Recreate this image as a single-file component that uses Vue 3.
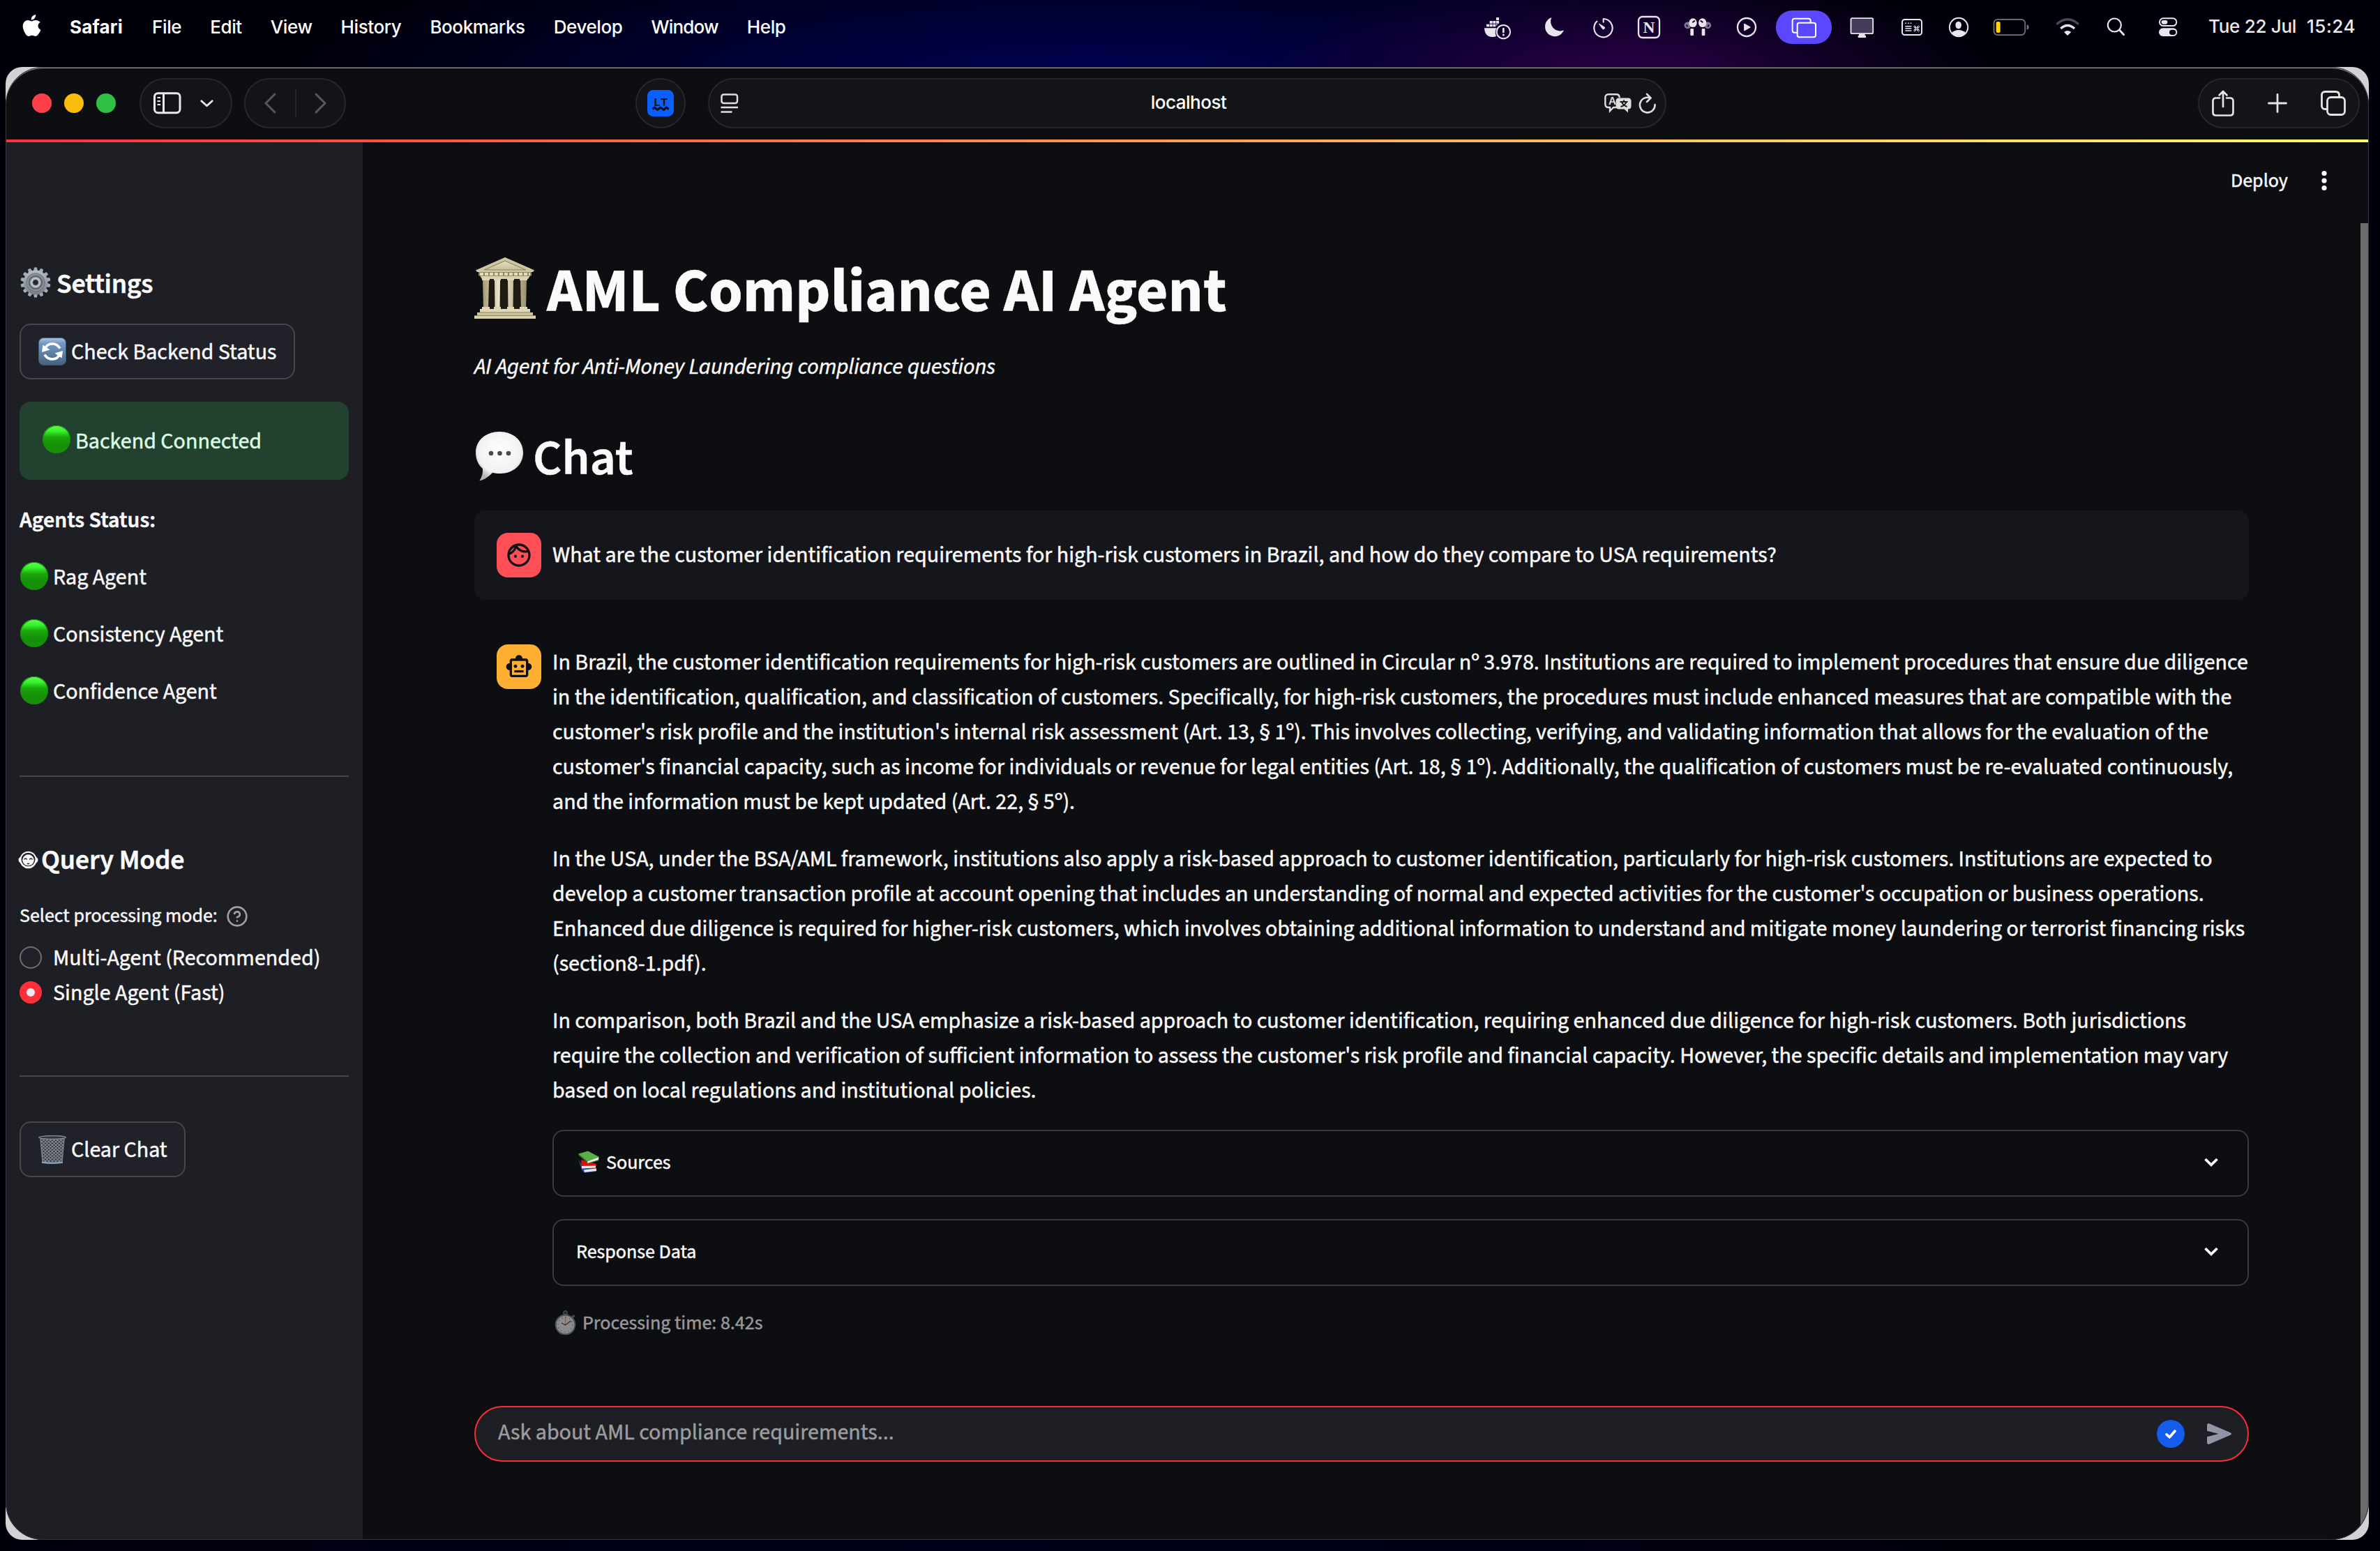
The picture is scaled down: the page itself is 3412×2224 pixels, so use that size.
<script setup>
const menus = ['File', 'Edit', 'View', 'History', 'Bookmarks', 'Develop', 'Window', 'Help']
const agents = ['Rag Agent', 'Consistency Agent', 'Confidence Agent']
const paragraphs = [
  [
    'In Brazil, the customer identification requirements for high-risk customers are outlined in Circular nº 3.978. Institutions are required to implement procedures that ensure due diligence',
    'in the identification, qualification, and classification of customers. Specifically, for high-risk customers, the procedures must include enhanced measures that are compatible with the',
    "customer's risk profile and the institution's internal risk assessment (Art. 13, § 1º). This involves collecting, verifying, and validating information that allows for the evaluation of the",
    "customer's financial capacity, such as income for individuals or revenue for legal entities (Art. 18, § 1º). Additionally, the qualification of customers must be re-evaluated continuously,",
    'and the information must be kept updated (Art. 22, § 5º).',
  ],
  [
    'In the USA, under the BSA/AML framework, institutions also apply a risk-based approach to customer identification, particularly for high-risk customers. Institutions are expected to',
    "develop a customer transaction profile at account opening that includes an understanding of normal and expected activities for the customer's occupation or business operations.",
    'Enhanced due diligence is required for higher-risk customers, which involves obtaining additional information to understand and mitigate money laundering or terrorist financing risks',
    '(section8-1.pdf).',
  ],
  [
    'In comparison, both Brazil and the USA emphasize a risk-based approach to customer identification, requiring enhanced due diligence for high-risk customers. Both jurisdictions',
    "require the collection and verification of sufficient information to assess the customer's risk profile and financial capacity. However, the specific details and implementation may vary",
    'based on local regulations and institutional policies.',
  ],
]
const gearTeeth = Array.from({ length: 14 }, (_, i) => (i * 360) / 14)
</script>

<template>
  <div class="screen">
    <header class="menubar">
      <svg class="apple" viewBox="0 0 27 32"><path d="M19.2 0c.3 2-.6 3.900-1.700 5.200-1.200 1.400-3 2.400-4.700 2.200-.3-1.900.6-3.900 1.700-5.100C15.700 1 17.700.1 19.200 0zM25.600 11c-2 1.200-3.100 2.900-3.100 5.100 0 2.600 1.500 4.700 3.900 5.600-.6 1.900-1.500 3.700-2.700 5.400-1.300 1.900-2.600 3.800-4.700 3.800-2 0-2.600-1.200-5-1.200s-3.100 1.200-5 1.200c-2 .1-3.500-2-4.800-3.900C1.500 23.200-.8 16.300 1.900 11.800c1.300-2.200 3.600-3.700 6.100-3.700 2.100 0 3.900 1.400 5.200 1.400 1.200 0 3.400-1.600 5.900-1.400 1.200.1 4.500.4 6.500 2.900z" fill="#fff"/></svg>
      <b class="app-name">Safari</b>
      <nav class="menus"><span v-for="m in menus" :key="m">{{ m }}</span></nav>

      <div class="status">
        <svg width="69" height="64" viewBox="0 0 207 192">
          <g fill="#e8e5ec"><path d="M75 51h12v12H75zM47 66h12v11H47zM61 66h12v11H61zM75 66h12v11H75zM33 80h12v11H33zM47 80h12v11H47zM61 80h12v11H61zM75 80h8l-8 6z"/><path d="M24 97h53c-7 9-7 23-2 34-5 3-11 4-18 4-21 0-32-14-33-38z"/></g>
          <circle cx="106" cy="113" r="29" fill="none" stroke="#e8e5ec" stroke-width="6"/>
          <path d="M106 99v15" stroke="#e8e5ec" stroke-width="8" stroke-linecap="round"/><circle cx="106" cy="126" r="4.500" fill="#e8e5ec"/>
        </svg>
        <svg width="74.333" height="64" viewBox="207 0 223 192"><path d="M313 51A42 42 0 1 0 366 106A41 41 0 0 1 313 51Z" fill="#e8e5ec"/></svg>
        <svg width="66.667" height="64" viewBox="430 0 200 192"><path d="M537 71V57A39.500 39.500 0 1 1 509 68" fill="none" stroke="#e8e5ec" stroke-width="6.500" stroke-linecap="round" stroke-linejoin="round"/><path d="M518 78l24 15a6 6 0 0 1-8 8z" fill="#e8e5ec" stroke="#e8e5ec" stroke-width="3" stroke-linejoin="round"/></svg>
        <svg width="66.667" height="64" viewBox="630 0 200 192"><rect x="687" y="48" width="90" height="90" rx="17" fill="none" stroke="#e8e5ec" stroke-width="7"/><text x="732" y="116" text-anchor="middle" font-family="Liberation Serif, serif" font-weight="700" font-size="70" fill="#e8e5ec">N</text></svg>
        <svg width="73.333" height="64" viewBox="830 0 220 192">
          <circle cx="897" cy="85" r="14.500" fill="#827894"/><circle cx="984" cy="85" r="14.500" fill="#827894"/>
          <g fill="#e8e5ec"><ellipse cx="920" cy="74" rx="17" ry="19"/><ellipse cx="961" cy="74" rx="17" ry="19"/><rect x="909" y="99" width="14" height="30" rx="3"/><rect x="958" y="99" width="14" height="30" rx="3"/></g>
          <path d="M920 71l7-5M961 71l-7-5M893 84l3 5M988 84l-3 5" stroke="#1a0735" stroke-width="6" stroke-linecap="round"/>
        </svg>
        <svg width="70" height="64" viewBox="1050 0 210 192"><circle cx="1152" cy="93" r="39" fill="none" stroke="#e8e5ec" stroke-width="7"/><path d="M1142 78l26 15-26 15z" fill="#e8e5ec" stroke="#e8e5ec" stroke-width="3" stroke-linejoin="round"/></svg>
        <svg width="93.333" height="64" viewBox="1260 0 280 192">
          <rect x="1278" y="21" width="240" height="144" rx="70" fill="#5b47ff"/>
          <g fill="none" stroke="#fff" stroke-width="6"><path d="M1368 116h-10q-9 0-9-9V65q0-9 9-9h60q9 0 9 9v8"/><rect x="1370" y="74" width="79" height="62" rx="9"/></g>
        </svg>
        <svg width="72.667" height="64" viewBox="-8 0 218 192"><rect x="53.500" y="54.500" width="95" height="66" rx="5" fill="#463b5b" stroke="#e8e5ec" stroke-width="5.500"/><path d="M88 121h26v8h4v9H84v-9h4z" fill="#e8e5ec"/></svg>
        <svg width="68.333" height="64" viewBox="210 0 205 192">
          <rect x="273" y="60" width="84" height="66" rx="11" fill="none" stroke="#e8e5ec" stroke-width="6"/>
          <path d="M286 76h5M297 76h5M308 76h5M286 89h27M286 98h27M286 108h27" stroke="#e8e5ec" stroke-width="4.500"/>
          <g fill="none" stroke="#e8e5ec" stroke-width="3"><path d="M331 90v18M339 90v18M325 95.500h20M325 102.500h20"/><circle cx="327" cy="91" r="3.500"/><circle cx="343" cy="91" r="3.500"/><circle cx="327" cy="107" r="3.500"/><circle cx="343" cy="107" r="3.500"/></g>
        </svg>
        <svg width="65" height="64" viewBox="415 0 195 192"><circle cx="517" cy="93" r="39.500" fill="none" stroke="#e8e5ec" stroke-width="6"/><ellipse cx="516" cy="84" rx="13" ry="15.500" fill="#e8e5ec"/><path d="M485 119q13-14 32-14t32 14a41 41 0 0 1-64 0z" fill="#e8e5ec"/></svg>
        <svg width="86.667" height="64" viewBox="610 0 260 192"><rect x="668.500" y="59.500" width="134" height="67" rx="16" fill="none" stroke="#77747f" stroke-width="5"/><rect x="678" y="69" width="18" height="48" rx="7" fill="#ffd60a"/><path d="M810 82q9 3 9 11t-9 11z" fill="#77747f"/></svg>
        <svg width="75" height="64" viewBox="870 0 225 192"><g fill="none" stroke-width="10"><path d="M937 80Q984 38 1032 80" stroke="#4b4959"/><path d="M955 99Q984 72 1014 99" stroke="#e8e5ec"/></g><path d="M969 114q15-12 31 0l-16 15z" fill="#e8e5ec"/></svg>
        <svg width="70" height="64" viewBox="1095 0 210 192"><circle cx="1186" cy="84" r="28.500" fill="none" stroke="#e8e5ec" stroke-width="6.500"/><path d="M1208 106l18 19" stroke="#e8e5ec" stroke-width="8.500" stroke-linecap="round"/></svg>
        <svg width="65" height="64" viewBox="1305 0 195 192"><rect x="1380" y="55" width="73" height="32" rx="16" fill="none" stroke="#e8e5ec" stroke-width="6"/><rect x="1388" y="63" width="26" height="17" rx="8.500" fill="#e8e5ec"/><rect x="1377" y="97" width="79" height="35" rx="17.500" fill="#e8e5ec"/><rect x="1422" y="104" width="28" height="22" rx="11" fill="#02000f"/></svg>
      </div>
      <div class="clock"><span>Tue 22 Jul</span><span class="time">15:24</span></div>
    </header>

    <div class="window-back">
      <div class="window">
        <div class="toolbar">
          <i class="light red"></i><i class="light yellow"></i><i class="light green"></i>
          <div class="pill sidebar-pill">
            <svg width="40" height="32" viewBox="0 0 40 32" fill="none" stroke="#e9e9ea" stroke-width="3"><rect x="1.500" y="1.700" width="36.500" height="28" rx="5"/><path d="M14.500 2v28"/><path d="M5.500 8h4.500M5.500 13h4.500M5.500 18h4.500" stroke-width="2.200"/></svg>
            <svg class="small-chev" width="19" height="11" viewBox="0 0 19 11" fill="none" stroke="#e9e9ea" stroke-width="2.800" stroke-linecap="round" stroke-linejoin="round"><path d="M1.800 1.800l7.700 7 7.700-7"/></svg>
          </div>
          <div class="pill nav-pill">
            <svg width="17" height="30" viewBox="0 0 17 30" fill="none" stroke="#57585c" stroke-width="3" stroke-linecap="round" stroke-linejoin="round"><path d="M15 2L2 15l13 13"/></svg>
            <i></i>
            <svg width="17" height="30" viewBox="0 0 17 30" fill="none" stroke="#57585c" stroke-width="3" stroke-linecap="round" stroke-linejoin="round"><path d="M2 2l13 13L2 28"/></svg>
          </div>
          <div class="pill lt-pill">
            <svg width="38" height="38" viewBox="0 0 38 38"><rect width="38" height="38" rx="8.500" fill="#0a60ff"/><text x="19" y="22.500" text-anchor="middle" font-family="Liberation Mono, monospace" font-weight="700" font-size="17" fill="#10131c">LT</text><path d="M7.500 27.500l3-2.500 4 3.500 4.500-3.500 4.500 3.500 4-3.500 3 2.500" fill="none" stroke="#10131c" stroke-width="3" stroke-linejoin="round"/></svg>
          </div>
          <div class="pill address">
            <svg width="26" height="28" viewBox="0 0 26 28" fill="none" stroke="#dededf" stroke-width="2.500"><rect x="1.500" y="1.400" width="22.500" height="12.500" rx="3"/><path d="M.5 20h24.500M.5 26.500h16"/></svg>
            <span>localhost</span>
            <div class="address-end">
              <svg width="39" height="28" viewBox="0 0 39 28"><path d="M17 20H13l-5 5v-5H6q-4.700 0-4.700-4.700V6Q1.300 1.300 6 1.300h11q4.700 0 4.700 4.700" fill="none" stroke="#dededf" stroke-width="2.400"/><text x="11.200" y="16" text-anchor="middle" font-family="Inter, sans-serif" font-size="15" font-weight="600" fill="#dededf">A</text><path d="M21 6.500h13q4.500 0 4.500 4.500v7q0 4.500-4.500 4.500v5L28.500 22.500H21q-4.500 0-4.500-4.500v-7q0-4.500 4.500-4.500z" fill="#dededf"/><path d="M22.500 12h11M28 9.500V12M31.500 12q-1.500 5-8 7M25 12q1.500 5 7.500 7" fill="none" stroke="#15161a" stroke-width="2"/></svg>
              <svg width="26" height="30" viewBox="0 0 26 30" fill="none" stroke="#dededf" stroke-width="2.600" stroke-linecap="round" stroke-linejoin="round"><path d="M17 7.700A10.800 10.800 0 1 0 23.500 17"/><path d="M12 1.800L17.500 7.500 12 13"/></svg>
            </div>
          </div>
          <div class="pill actions">
            <svg width="32" height="38" viewBox="0 0 32 38" fill="none" stroke="#e4e4e5" stroke-width="2.700" stroke-linecap="round" stroke-linejoin="round"><path d="M11 11.500H6q-4.500 0-4.500 4.500v16q0 4.500 4.500 4.500h20q4.500 0 4.500-4.500V16q0-4.500-4.500-4.500h-5M16 24V2M10.500 7.500L16 2l5.500 5.500"/></svg>
            <svg width="28" height="28" viewBox="0 0 28 28" stroke="#e4e4e5" stroke-width="2.800" stroke-linecap="round"><path d="M14 1.500v25M1.500 14h25"/></svg>
            <svg width="36" height="36" viewBox="0 0 36 36" fill="none" stroke="#e4e4e5" stroke-width="2.800"><path d="M8.500 26.500H6.500q-5 0-5-5V6.500q0-5 5-5h15q5 0 5 5v2"/><rect x="9.500" y="9.500" width="25" height="25" rx="5"/></svg>
          </div>
        </div>
        <div class="rainbow"></div>

        <div class="body">
          <aside class="sidebar">
            <h2 class="settings">
              <svg width="44" height="44" viewBox="-22 -22 44 44">
                <defs><linearGradient id="gearFill" x1="0" y1="0" x2="0" y2="1"><stop offset="0" stop-color="#b3bfca"/><stop offset="1" stop-color="#7b7b84"/></linearGradient></defs>
                <g fill="url(#gearFill)"><path v-for="a in gearTeeth" :key="a" d="M-3.200-15L-2-21.500H2L3.200-15z" :transform="`rotate(${a})`" fill="#a3adb7"/><circle r="17.500"/></g>
                <circle r="13.500" fill="#6a6f78"/><circle r="11.500" fill="none" stroke="#8d939b" stroke-width="2"/><circle r="9" fill="#5d626b"/>
                <circle r="6" fill="#3c3f45" stroke="#b9c0c8" stroke-width="3.500"/><circle r="2.600" fill="#26231f"/>
              </svg>
              <span>Settings</span>
            </h2>
            <button class="btn check">
              <svg width="40" height="40" viewBox="0 0 40 40">
                <defs><linearGradient id="syncFill" x1="0" y1="0" x2="0" y2="1"><stop offset="0" stop-color="#a9c3de"/><stop offset=".2" stop-color="#7599c3"/><stop offset="1" stop-color="#46617f"/></linearGradient></defs>
                <rect x=".5" y=".5" width="39" height="39" rx="7" fill="url(#syncFill)" stroke="#3c5876"/>
                <path d="M9.500 16Q12.500 9 20 9q7 0 11 6.500" fill="none" stroke="#fff" stroke-width="3.600"/><path d="M30.500 24Q27.500 31 20 31q-7 0-11-6.500" fill="none" stroke="#fff" stroke-width="3.600"/>
                <path d="M5 21l1.500-10.500 10 7zM35 19l-1.500 10.500-10-7z" fill="#fff"/>
              </svg>
              <span>Check Backend Status</span>
            </button>
            <div class="success"><i class="dot"></i><span>Backend Connected</span></div>
            <p class="agents-title">Agents Status:</p>
            <p v-for="a in agents" :key="a" class="agent"><i class="dot"></i><span>{{ a }}</span></p>
            <hr class="rule first" />
            <h2 class="query">
              <svg width="29" height="26" viewBox="0 0 29 26"><ellipse cx="14.500" cy="13" rx="14" ry="7.500" fill="#fafafa"/><ellipse cx="14.500" cy="13" rx="12" ry="12.300" fill="#fafafa"/><ellipse cx="14.500" cy="12.500" rx="10" ry="9.800" fill="#1e1f24"/><ellipse cx="14.500" cy="13.300" rx="8.300" ry="8" fill="#fafafa"/><path d="M8.500 12.500q2-3 4.300 0M16.200 12.500q2-3 4.300 0M12.800 18.600h3.400" fill="none" stroke="#1e1f24" stroke-width="1.500"/></svg>
              <span>Query Mode</span>
            </h2>
            <div class="label"><span>Select processing mode:</span>
              <svg width="32" height="32" viewBox="0 0 24 24" fill="none" stroke="#a0a0a3" stroke-width="2" stroke-linecap="round" stroke-linejoin="round"><circle cx="12" cy="12" r="10"/><path d="M9.090 9a3 3 0 0 1 5.830 1c0 2-3 3-3 3M12 17h.01"/></svg>
            </div>
            <div class="radio"><i></i><span>Multi-Agent (Recommended)</span></div>
            <div class="radio on"><i></i><span>Single Agent (Fast)</span></div>
            <hr class="rule second" />
            <button class="btn clear">
              <svg width="40" height="41" viewBox="0 0 40 41">
                <defs><pattern id="mesh" width="5" height="4.600" patternUnits="userSpaceOnUse"><path d="M0 0l5 4.600M5 0L0 4.600" stroke="#8f969e" stroke-width="1"/></pattern></defs>
                <path d="M2.500 4h35L34 38.500H6z" fill="#33353b"/><path d="M2.500 4h35L34 38.500H6z" fill="url(#mesh)"/><path d="M3 5L6 38M37 5l-3 33" stroke="#7b828b" stroke-width="1.400"/>
                <ellipse cx="20" cy="3" rx="19.300" ry="2.400" fill="#30343b" stroke="#85909c" stroke-width="1.300"/><path d="M5 38.500q15 2.500 30 0" stroke="#86a0bd" stroke-width="2.400" fill="none"/>
              </svg>
              <span>Clear Chat</span>
            </button>
          </aside>

          <main class="main">
            <div class="deploy"><span>Deploy</span><svg width="8" height="30" viewBox="0 0 8 30" fill="#fafafa"><circle cx="4" cy="4.500" r="3.600"/><circle cx="4" cy="15" r="3.600"/><circle cx="4" cy="25.500" r="3.600"/></svg></div>

            <h1 class="title">
              <svg width="88" height="88" viewBox="0 0 88 88">
                <defs>
                  <linearGradient id="stone" x1="0" y1="0" x2="0" y2="1"><stop offset="0" stop-color="#e6debd"/><stop offset="1" stop-color="#c9bf98"/></linearGradient>
                  <linearGradient id="column" x1="0" y1="0" x2="1" y2="0"><stop offset="0" stop-color="#a39a75"/><stop offset=".4" stop-color="#f1ead0"/><stop offset="1" stop-color="#9b916d"/></linearGradient>
                </defs>
                <rect x="15" y="28" width="58" height="46" fill="#1d1a12"/>
                <path d="M44 0L86 18.500 84 21H4L2 18.500z" fill="#cfc6a2"/><path d="M44 5L74 18H14z" fill="url(#stone)" stroke="#8f8663" stroke-width="1.200"/>
                <rect x="6" y="21" width="76" height="5.500" fill="#8f8663"/><path d="M8 24h72" stroke="#e2dab8" stroke-width="4" stroke-dasharray="5 2"/>
                <path d="M8 26.500h72l-3 4.500H11z" fill="#d8cfab"/>
                <g fill="url(#column)"><path d="M12 31h9l-1 43h-7zM29 31h8l-.5 43h-7zM48 31h8l-.5 43h-7zM66 31h9l-1 43h-7z"/></g>
                <g fill="#ded5b2"><path d="M11 30h11v3H11zM28 30h10v3H28zM47 30h10v3H47zM65 30h11v3H65zM11 71h11v3H11zM28 71h10v3H28zM47 71h10v3H47zM65 71h11v3H65z"/></g>
                <path d="M8 74h72v5H8z" fill="#e0d7b5"/><path d="M4 79h80v4.500H4z" fill="#cbc19b"/><path d="M0 83.500h88V88H0z" fill="#d9d0ac"/><path d="M8 79h72M3 83.500h82" stroke="#8f8663" stroke-width="1"/>
              </svg>
              <span>AML Compliance AI Agent</span>
            </h1>
            <p class="subtitle">AI Agent for Anti-Money Laundering compliance questions</p>
            <h2 class="chat">
              <svg width="70" height="72" viewBox="0 0 70 72">
                <defs><radialGradient id="bubble" cx=".5" cy=".4" r=".6"><stop offset="0" stop-color="#fff"/><stop offset=".75" stop-color="#f1f1f1"/><stop offset="1" stop-color="#b4b4b4"/></radialGradient></defs>
                <path d="M35 1c19.500 0 34 12.500 34 30S55 61 36 61c-4 0-8-.4-11-1.300C20 65 13 70.500 6.500 71c3.500-5 5-11 4.500-17C4.500 48.500 1 40.500 1 31 1 13.500 15.500 1 35 1z" fill="url(#bubble)"/>
                <g fill="#4a4a4a"><circle cx="23" cy="32" r="3.300"/><circle cx="35.500" cy="32" r="3.300"/><circle cx="48" cy="32" r="3.300"/></g>
              </svg>
              <span>Chat</span>
            </h2>

            <section class="message user">
              <div class="avatar"><svg width="40" height="40" viewBox="0 0 24 24" fill="#0e1117"><path d="M10.250 13c0 .69-.56 1.250-1.250 1.250S7.750 13.690 7.750 13s.56-1.250 1.250-1.250 1.250.56 1.250 1.250zM15 11.750c-.69 0-1.250.56-1.250 1.250s.56 1.250 1.250 1.250 1.250-.56 1.250-1.250-.56-1.250-1.250-1.250zm7 .25c0 5.520-4.480 10-10 10S2 17.520 2 12 6.480 2 12 2s10 4.480 10 10zM10.660 4.120C12.060 6.440 14.600 8 17.500 8c.46 0 .91-.05 1.340-.12C17.440 5.560 14.900 4 12 4c-.46 0-.91.05-1.340.12zM4.420 9.470c1.710-.97 3.030-2.550 3.660-4.440C6.370 6 5.050 7.580 4.420 9.470zM20 12c0-.78-.12-1.530-.33-2.240-.7.15-1.420.24-2.170.24-3.130 0-5.920-1.440-7.760-3.690C8.690 8.870 6.600 10.880 4 11.860c.01.04 0 .09 0 .14 0 4.410 3.590 8 8 8s8-3.590 8-8z"/></svg></div>
              <p>What are the customer identification requirements for high-risk customers in Brazil, and how do they compare to USA requirements?</p>
            </section>

            <section class="message assistant">
              <div class="avatar"><svg width="40" height="40" viewBox="0 0 24 24" fill="#0e1117"><path d="M20 9V7c0-1.100-.9-2-2-2h-3c0-1.660-1.340-3-3-3S9 3.340 9 5H6c-1.100 0-2 .9-2 2v2c-1.660 0-3 1.340-3 3s1.340 3 3 3v4c0 1.100.9 2 2 2h12c1.100 0 2-.9 2-2v-4c1.660 0 3-1.340 3-3s-1.340-3-3-3zm-2 10H6V7h12v12zm-9-6c-.83 0-1.500-.67-1.500-1.500S8.170 10 9 10s1.500.67 1.500 1.500S9.830 13 9 13zm7.500-1.500c0 .83-.67 1.500-1.500 1.500s-1.500-.67-1.500-1.500.67-1.500 1.500-1.500 1.500.67 1.500 1.500zM8 15h8v2H8v-2z"/></svg></div>
              <div class="answer">
                <p v-for="(p, i) in paragraphs" :key="i"><span v-for="line in p" :key="line">{{ line }}</span></p>
                <div class="expander">
                  <svg class="books" width="32" height="32" viewBox="0 0 32 32">
                    <path d="M1 12l5 16 3 3 1-5z" fill="#23408f"/><path d="M5 24l22 1-1 5-17 1.500z" fill="#2a4aa6"/><path d="M9 27.500l18-2v3.500l-17 2z" fill="#e8e8ea"/>
                    <path d="M5 13l22 6-1 6H6z" fill="#d8130e"/><path d="M6 22l20-.5v3L6 25.500z" fill="#f0e6e4"/>
                    <path d="M1 4.500L15 .5l16 8.500-16 7.500z" fill="#5aae48"/><path d="M1 4.500l14 12v2L2 7z" fill="#2e7a2a"/><path d="M14 15.500l16.500-6.300-.5 4L14.500 18z" fill="#ededed"/><path d="M14.500 18l15.500-4.500 1 .5-16 5z" fill="#2e7a2a"/>
                  </svg>
                  <span>Sources</span>
                  <svg class="chev" width="20" height="13" viewBox="0 0 20 13" fill="none" stroke="#fafafa" stroke-width="3.700"><path d="M1.500 2L10 10.300 18.500 2"/></svg>
                </div>
                <div class="expander">
                  <span>Response Data</span>
                  <svg class="chev" width="20" height="13" viewBox="0 0 20 13" fill="none" stroke="#fafafa" stroke-width="3.700"><path d="M1.500 2L10 10.300 18.500 2"/></svg>
                </div>
                <div class="caption">
                  <svg width="31" height="36" viewBox="0 0 31 36">
                    <circle cx="15.500" cy="3.500" r="2.800" fill="#24262b" stroke="#45484f" stroke-width="1.400"/><path d="M15.500 5v4M25 10l3.500-3" stroke="#45484f" stroke-width="3"/>
                    <circle cx="15.500" cy="20.500" r="13.800" fill="#8c8c8e" stroke="#4c5563" stroke-width="2"/><circle cx="15.500" cy="20.500" r="10.500" fill="none" stroke="#57585b" stroke-width="1.600" stroke-dasharray="1.300 4.200"/>
                    <path d="M15.500 21V9" stroke="#8b5a43" stroke-width="1.200"/><path d="M10 18l5.500 3 8-6" fill="none" stroke="#2b2c30" stroke-width="1.300"/>
                  </svg>
                  <span>Processing time: 8.42s</span>
                </div>
              </div>
            </section>

            <div class="ask">
              <span>Ask about AML compliance requirements...</span>
              <svg width="40" height="40" viewBox="0 0 40 40"><circle cx="20" cy="20" r="20" fill="#155bec"/><path d="M14 20.800l4.400 4L26 16" fill="none" stroke="#fff" stroke-width="3.600" stroke-linecap="round" stroke-linejoin="round"/></svg>
              <svg class="send" width="35" height="30" viewBox="0 0 35 30"><path d="M0 2.500A2.300 2.300 0 0 1 3.300.3L34 13.600a1.500 1.500 0 0 1 0 2.800L3.300 29.700A2.300 2.300 0 0 1 0 27.500v-8.300L16.500 15 0 10.800z" fill="#9394a6"/></svg>
            </div>
          </main>
          <i class="scrollbar"></i>
        </div>
      </div>
    </div>
  </div>
</template>

<style>
body { margin: 0; background: #00000a; }
</style>

<style scoped>
.screen {
  width: 3412px; height: 2224px; overflow: hidden; box-sizing: border-box;
  padding: 0 16px 16px 8px;
  background:
    radial-gradient(520px 150px at 2330px 110px, #2b0044 0%, rgba(34, 0, 60, .6) 50%, transparent 100%),
    radial-gradient(1150px 210px at 1560px 110px, #000052 0%, rgba(0, 0, 70, .75) 40%, transparent 100%),
    radial-gradient(1500px 60px at 1400px 2224px, #00001e 0%, transparent 100%),
    #00000b;
  color: #fafafa;
  font-family: "Source Sans 3", "Source Sans Pro", "Noto Sans CJK SC", sans-serif;
  font-size: 32px; line-height: 50px;
  white-space: nowrap;
}
svg { display: block; flex: none; }
h1, h2, p { margin: 0; }
.body { -webkit-text-stroke: .45px currentColor; }

.menubar { display: flex; height: 96px; font: 500 26px/30px Inter, sans-serif; color: #fff; }
.apple { width: 27px; height: 32px; margin: 21px 0 0 24px; }
.app-name { margin: 24px 0 0 41px; font-weight: 700; letter-spacing: .2px; }
.menus { display: flex; gap: 41px; margin: 24px 0 0 42px; letter-spacing: -.4px; }
.menus span:nth-child(7) { letter-spacing: -.8px; }
.status { display: flex; margin: 8px 0 0 auto; }
.clock { display: flex; width: 214px; margin: 23px 16px 0 30px; color: #ebe9ee; letter-spacing: -.3px; }
.time { margin-left: 15px; letter-spacing: .5px; }

.window-back { height: 2112px; border-radius: 24px; background: #d2d2d4; overflow: hidden; }
.window {
  position: relative; height: 2112px; box-sizing: border-box; overflow: hidden;
  border-radius: 54px; background: #0d0e12;
}
.window::after {
  content: ""; position: absolute; inset: 0; border-radius: 54px; pointer-events: none;
  box-shadow: inset 0 0 0 1px #36373b, inset 0 2px 0 0 #97979b;
}
.toolbar { display: flex; align-items: center; height: 104px; padding-left: 38px; box-sizing: border-box; }
.light { width: 28px; height: 28px; margin-right: 18px; border-radius: 50%; }
.red { background: #ff3f48; }
.yellow { background: #fbbd0b; }
.green { background: #2fc045; }
.pill {
  display: flex; align-items: center; flex: none; box-sizing: border-box; height: 72px;
  border: 2px solid #26272c; border-radius: 36px; background: #131418;
}
.sidebar-pill { width: 133px; margin-left: 16px; padding-left: 18px; }
.small-chev { margin-left: 27px; }
.nav-pill { width: 146px; margin-left: 17px; padding: 0 26px 0 27px; justify-content: space-between; }
.nav-pill i { width: 2px; height: 40px; background: #212226; }
.lt-pill { width: 72px; margin-left: 415px; justify-content: center; }
.address { display: grid; grid-template-columns: 1fr auto 1fr; width: 1374px; margin-left: 32px; padding: 0 12px 0 16px; font: 500 26px/30px Inter, sans-serif; letter-spacing: -.5px; color: #fff; }
.address span { margin-top: -2px; }
.address-end { display: flex; gap: 10px; align-items: center; justify-content: flex-end; }
.actions { width: 232px; margin-left: 762px; padding: 0 18px; justify-content: space-between; }
.rainbow { height: 4px; background: linear-gradient(90deg, #ff2f3d, #ff7a4e 35%, #feb45b 60%, #fdf96c); }

.body { display: flex; height: 2004px; }
.sidebar { width: 512px; box-sizing: border-box; padding: 178px 20px 0; background: #1e1f24; }
.sidebar h2 { display: flex; align-items: center; height: 48px; font-size: 40px; line-height: 48px; font-weight: 600; }
.settings svg { margin: -2px 0 0 1px; }
.settings span { margin: 4px 0 0 8px; letter-spacing: -.3px; }
.btn {
  display: flex; align-items: center; box-sizing: border-box; height: 80px; padding: 0 25px;
  border: 2px solid #46474b; border-radius: 16px; background: #21212a; color: #fafafa;
  font: inherit;
}
.btn span { margin: 2px 0 0 7px; -webkit-text-stroke: .45px currentColor; }
.check { width: 395px; margin-top: 34px; }
.success { display: flex; align-items: center; height: 112px; margin-top: 32px; padding-left: 33px; border-radius: 16px; background: #23412f; color: #dcfee5; }
.success span { margin: 1px 0 0 7px; }
.dot { flex: none; width: 40px; height: 40px; border-radius: 50%; background: linear-gradient(180deg, #6cf75c 0%, #35f52a 20%, #1aa60b 42%, #158f08 70%, #1b8f0c 100%); box-shadow: inset 0 0 0 1px #148a0a; }
.success .dot { margin-top: -4px; }
.agents-title { margin: 33px 0 -1px; font-weight: 600; }
.agent { display: flex; align-items: center; height: 50px; margin-top: 32px; padding-left: 1px; }
.agent .dot { margin-top: -2px; }
.agent span { margin: 2px 0 0 7px; }
.rule { height: 2px; border: 0; background: #45464a; }
.first { margin: 96px 0 0; }
.query { margin-top: 94px; }
.query svg { margin: 2px 0 0 -2px; }
.query span { margin: 4px 0 0 4px; letter-spacing: -.2px; }
.label { display: flex; align-items: center; height: 40px; margin-top: 36px; font-size: 28px; line-height: 40px; }
.label span { margin-top: 2px; }
.label svg { margin: 3px 0 0 12px; }
.radio { display: flex; align-items: center; height: 50px; }
.label + .radio { margin-top: 16px; }
.radio i { width: 32px; height: 32px; box-sizing: border-box; border: 2px solid #6d6e72; border-radius: 50%; background: #21212a; }
.radio.on i { border: 10px solid #ff2f3a; background: #eceaf2; }
.radio span { margin: 2px 0 0 16px; }
.second { margin: 94px 0 0; }
.clear { width: 238px; margin-top: 64px; }

.main { width: 2864px; box-sizing: border-box; padding: 34px 160px 0 160px; }
.deploy { display: flex; align-items: center; height: 40px; margin-left: 2518px; font-size: 28px; line-height: 40px; }
.deploy span { margin-top: 2px; }
.deploy svg { margin: 2px 0 0 48px; }
.title { display: flex; align-items: center; height: 106px; margin-top: 84px; font-size: 88px; line-height: 106px; font-weight: 700; }
.title svg { margin-top: -4px; }
.title span { margin: 7px 0 0 16px; }
.subtitle { margin: 33px 0 -1px; font-style: italic; }
.chat { display: flex; align-items: center; height: 86px; margin-top: 62px; font-size: 72px; line-height: 86px; font-weight: 600; }
.chat svg { margin: -3px 0 0 1px; }
.chat span { margin: 5px 0 0 13px; }
.message { display: flex; align-items: flex-start; gap: 16px; padding-left: 32px; }
.avatar { display: flex; align-items: center; justify-content: center; flex: none; width: 64px; height: 64px; border-radius: 16px; background: #ff4f56; }
.user { height: 128px; align-items: center; margin-top: 34px; border-radius: 16px; background: #15161b; }
.assistant { margin-top: 64px; }
.assistant .avatar { background: #ffb033; }
.answer { width: 2432px; padding-top: 1px; }
.answer p { margin-bottom: 32px; }
.answer p span { display: block; }
.answer p + .expander { margin-top: -1px; }
.expander { display: flex; align-items: center; box-sizing: border-box; height: 96px; padding: 0 42px 4px 32px; border: 2px solid #3a3b3f; border-radius: 16px; font-size: 28px; }
.expander + .expander { margin-top: 32px; }
.expander span { margin-top: 2px; }
.books { margin: 0 9px 0 2px; }
.chev { margin: 1px 0 0 auto; }
.caption { display: flex; align-items: center; height: 42px; margin: 32px 0 0 3px; font-size: 28px; line-height: 42px; color: #98989a; }
.caption span { margin-left: 9px; }
.ask { display: flex; align-items: center; box-sizing: border-box; height: 80px; margin-top: 98px; padding: 0 23px 0 32px; border: 2px solid #ff2b38; border-radius: 40px; background: #1e1f24; color: #9c9c9f; }
.ask span { margin: -5px auto 0 0; }
.send { margin-left: 32px; }
.scrollbar { align-self: flex-start; width: 12px; height: 1888px; margin-top: 116px; background: #6b6b6c; }
</style>
